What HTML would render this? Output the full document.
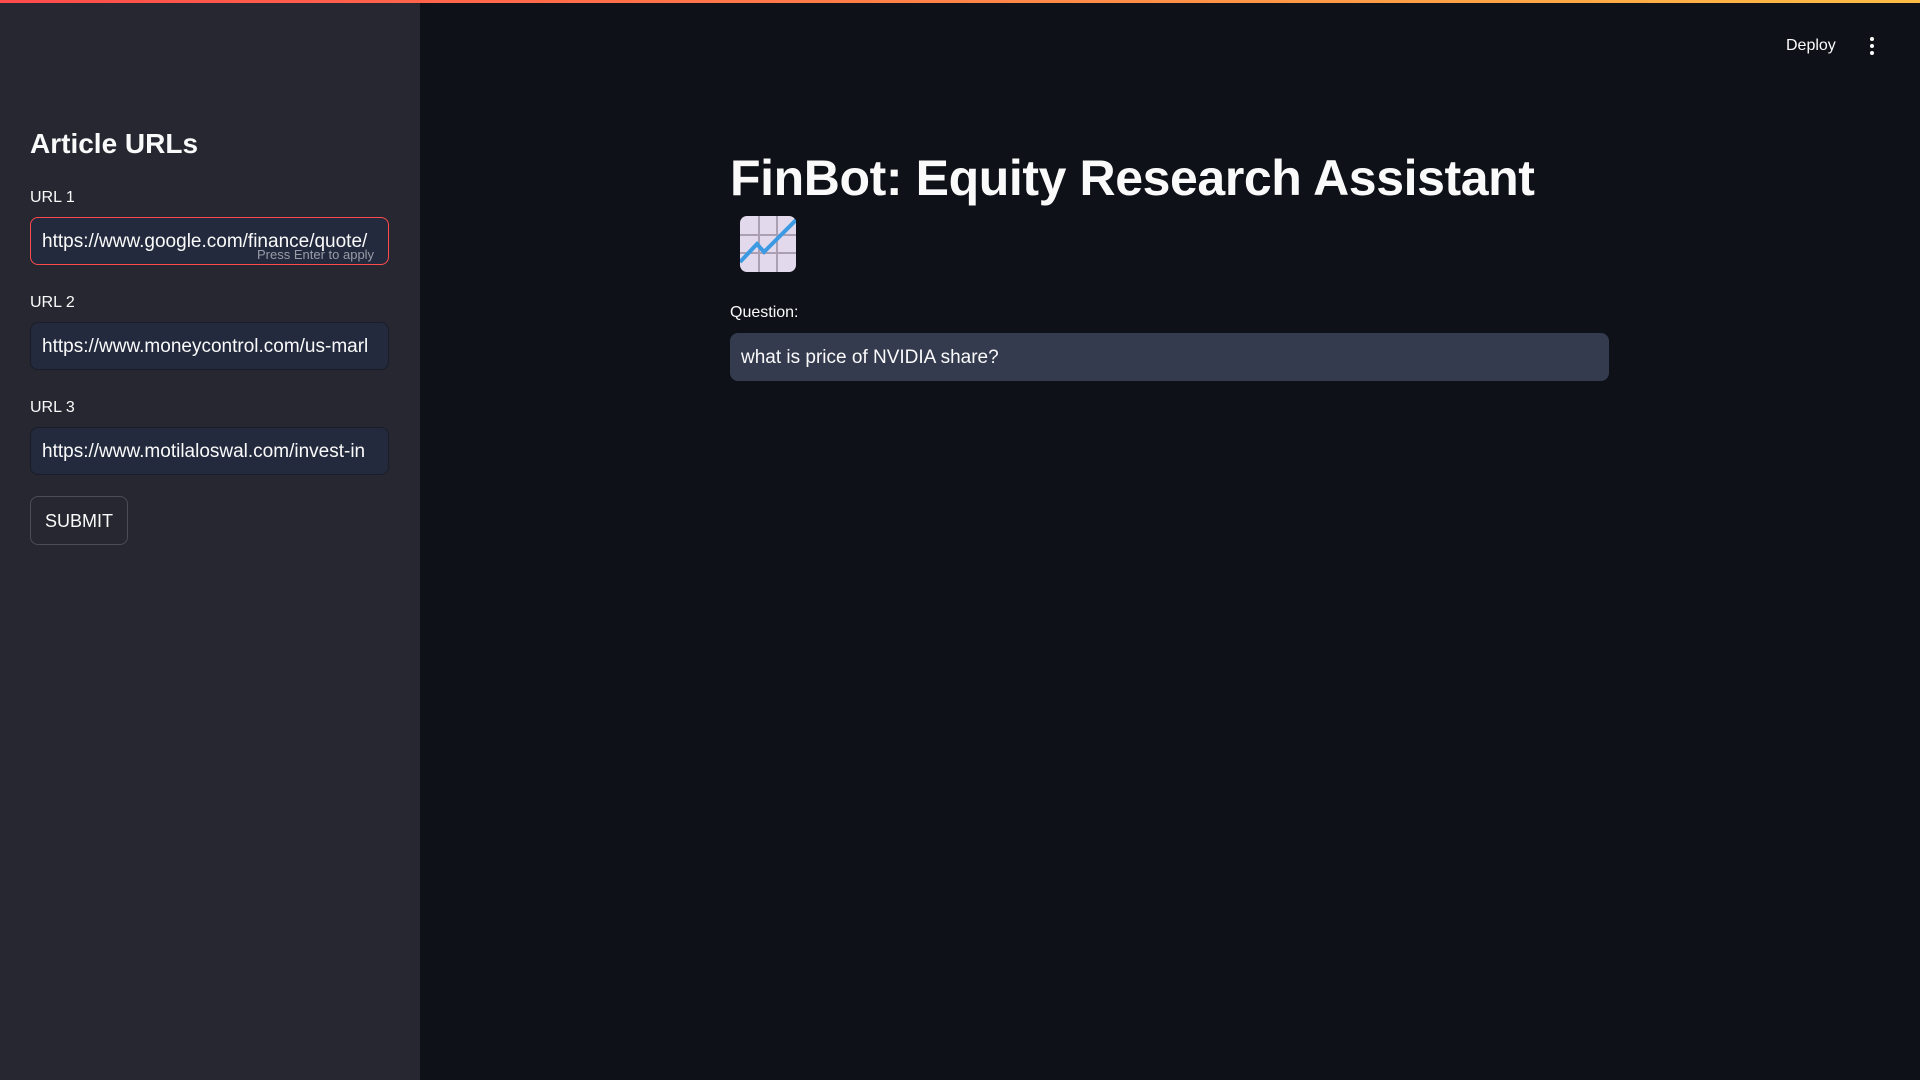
<!DOCTYPE html>
<html><head><meta charset="utf-8"><style>
*{box-sizing:border-box;margin:0;padding:0}
body{width:1920px;height:1080px;background:#0e1117;font-family:"Liberation Sans",sans-serif;color:#fafafa;position:relative;overflow:hidden}
.bar{position:absolute;left:0;top:0;width:1920px;height:3px;background:linear-gradient(90deg,#ff4b4b,#ffbd45)}
.side{position:absolute;left:0;top:3px;width:420px;height:1077px;background:#262730}
.abs{position:absolute}
.lbl{font-size:16px;color:#fafafa}
.inp{position:absolute;left:30px;width:359px;height:48px;border-radius:8px;background:#232a3d;border:1px solid #1a1d28;font-size:19px;padding-left:11px;line-height:48px;white-space:nowrap;overflow:hidden}
</style></head><body>
<div class="bar"></div>
<div class="side">
<div class="abs" style="left:30px;top:125px;font-size:28px;font-weight:bold">Article URLs</div>
<div class="abs lbl" style="left:30px;top:186px">URL 1</div>
<div class="inp" style="top:214px;border-color:#ff4b4b">https://www.google.com/finance/quote/</div>
<div class="abs" style="left:257px;top:244px;font-size:13px;color:#9a9ca6">Press Enter to apply</div>
<div class="abs lbl" style="left:30px;top:291px">URL 2</div>
<div class="inp" style="top:319px">https://www.moneycontrol.com/us-marl</div>
<div class="abs lbl" style="left:30px;top:396px">URL 3</div>
<div class="inp" style="top:424px">https://www.motilaloswal.com/invest-in</div>
<div class="abs" style="left:30px;top:493px;width:98px;height:49px;border:1px solid #4a4c57;border-radius:8px;font-size:18px;text-align:center;line-height:49px">SUBMIT</div>
</div>
<div class="abs" style="left:1786px;top:37px;font-size:16px">Deploy</div>
<div class="abs" style="left:1870px;top:37px;width:4px">
<div style="width:4px;height:4px;border-radius:2px;background:#fafafa;margin-bottom:3px"></div>
<div style="width:4px;height:4px;border-radius:2px;background:#fafafa;margin-bottom:3px"></div>
<div style="width:4px;height:4px;border-radius:2px;background:#fafafa"></div></div>
<div class="abs" style="left:730px;top:150px;font-size:50px;font-weight:bold;letter-spacing:-0.4px;line-height:56px">FinBot: Equity Research Assistant</div>
<svg class="abs" style="left:740px;top:216px" width="56" height="56" viewBox="0 0 56 56">
<rect x="0" y="0" width="56" height="56" rx="7" fill="#e2d9ec"/>
<g stroke="#aa9fb3" stroke-width="2"><line x1="19" y1="0" x2="19" y2="56"/><line x1="37" y1="0" x2="37" y2="56"/><line x1="0" y1="19" x2="56" y2="19"/><line x1="0" y1="37" x2="56" y2="37"/></g>
<polyline points="0,46 17,28 24,36 56,4" fill="none" stroke="#3b9ae1" stroke-width="4"/>
</svg>
<div class="abs lbl" style="left:730px;top:304px">Question:</div>
<div class="abs" style="left:730px;top:333px;width:879px;height:48px;border-radius:8px;background:#343b4e;font-size:19px;line-height:50px;padding-left:11px">what is price of NVIDIA share?</div>
</body></html>
